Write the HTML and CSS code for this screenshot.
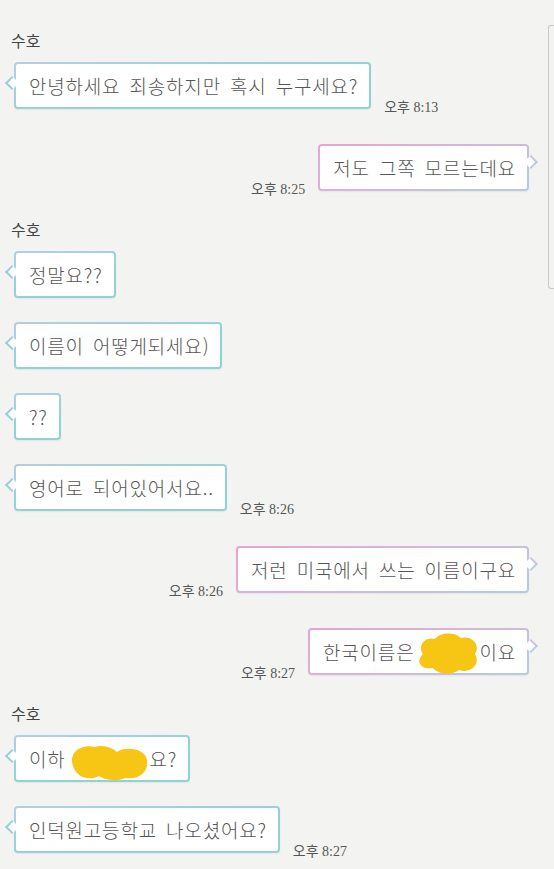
FILE: index.html
```html
<!DOCTYPE html>
<html lang="ko">
<head>
    <meta charset="UTF-8">
    <meta name="viewport" content="width=device-width, initial-scale=1.0">
    <title>수호</title>
    <link rel="stylesheet" href="styles.css">
</head>
<body>
    <div class="chat">
        <div class="sender first">수호</div>
        <div class="row left">
            <div class="bubble">안녕하세요 죄송하지만 혹시 누구세요?</div>
            <span class="time">오후 8:13</span>
        </div>

        <div class="row right gap-lg">
            <span class="time">오후 8:25</span>
            <div class="bubble">저도 그쪽 모르는데요</div>
        </div>

        <div class="sender">수호</div>
        <div class="row left">
            <div class="bubble">정말요??</div>
        </div>
        <div class="row left">
            <div class="bubble">이름이 어떻게되세요)</div>
        </div>
        <div class="row left">
            <div class="bubble">??</div>
        </div>
        <div class="row left">
            <div class="bubble">영어로 되어있어서요..</div>
            <span class="time">오후 8:26</span>
        </div>

        <div class="row right gap-lg">
            <span class="time">오후 8:26</span>
            <div class="bubble">저런 미국에서 쓰는 이름이구요</div>
        </div>
        <div class="row right gap-lg">
            <span class="time">오후 8:27</span>
            <div class="bubble">한국이름은<svg class="blob blob-a" width="66" height="42" viewBox="0 0 66 42"><path d="M8 22 C2 14 10 4 20 7 C26 0 40 0 46 6 C56 3 66 12 60 22 C66 32 56 42 44 38 C36 44 22 42 18 36 C6 38 0 30 8 22 Z"/></svg>이요</div>
        </div>

        <div class="sender">수호</div>
        <div class="row left">
            <div class="bubble">이하<svg class="blob blob-b" width="80" height="40" viewBox="0 0 80 40"><path d="M3 20 C2 8 14 2 26 5 C34 2 44 6 48 10 C56 4 76 6 78 18 C80 30 70 38 56 36 C48 40 36 38 30 34 C18 40 5 34 3 20 Z"/></svg>요?</div>
        </div>
        <div class="row left">
            <div class="bubble">인덕원고등학교 나오셨어요?</div>
            <span class="time">오후 8:27</span>
        </div>
    </div>
    <div class="scrollbar"></div>
</body>
</html>
```

FILE: styles.css
```css
body {
    margin: 0;
    background-color: #f3f3f2;
    font-family: "Noto Sans CJK KR", sans-serif;
    color: #555;
}
.chat {
    padding: 30px 25px 20px 11px;
}
.sender {
    font-size: 16px;
    line-height: 20px;
    color: #444;
    margin-top: 28px;
}
.sender.first {
    margin-top: 0;
}
.row {
    display: flex;
    align-items: flex-end;
    margin-top: 24px;
}
.sender + .row {
    margin-top: 12px;
}
.row.gap-lg {
    margin-top: 35px;
}
.row.left {
    padding-left: 3px;
}
.row.right {
    justify-content: flex-end;
}
.bubble {
    position: relative;
    font-size: 19px;
    font-weight: 300;
    line-height: 43px;
    height: 43px;
    padding: 0 11px 0 13px;
    letter-spacing: 0.8px;
    word-spacing: 3px;
    white-space: nowrap;
    border: 2px solid transparent;
    border-radius: 4px;
    box-shadow: 0 1px 2px rgba(0, 0, 0, 0.06);
}
.left .bubble {
    background: linear-gradient(#fff, #fff) padding-box,
        linear-gradient(170deg, #b4cfe0, #8fd3d4 60%) border-box;
}
.right .bubble {
    background: linear-gradient(#fff, #fff) padding-box,
        linear-gradient(160deg, #e8a5d0, #d8b4dc 45%, #b2cde2) border-box;
}
.bubble::before {
    content: "";
    position: absolute;
    width: 8px;
    height: 8px;
    background: #fff;
    transform: rotate(45deg);
}
.left .bubble::before {
    left: -9px;
    top: 14px;
    border-left: 2px solid #98cfd6;
    border-bottom: 2px solid #98cfd6;
}
.right .bubble::before {
    right: -9px;
    top: 11px;
    border-top: 2px solid #ccc2de;
    border-right: 2px solid #bccbe0;
}
.time {
    font-family: "Liberation Serif", "Noto Sans CJK KR", serif;
    font-size: 14px;
    line-height: 16px;
    color: #555;
    white-space: nowrap;
    margin: 0 13px -7px;
}
.blob {
    vertical-align: middle;
    fill: #f7c514;
}
.blob-a {
    margin: -4px -2px 0 1px;
}
.blob-b {
    margin: 0 1px 0 3px;
}
.scrollbar {
    position: fixed;
    right: 0;
    top: 25px;
    width: 5px;
    height: 262px;
    border: 1px solid #c9c9c9;
    border-right: none;
    border-radius: 3px 0 0 3px;
}
```
